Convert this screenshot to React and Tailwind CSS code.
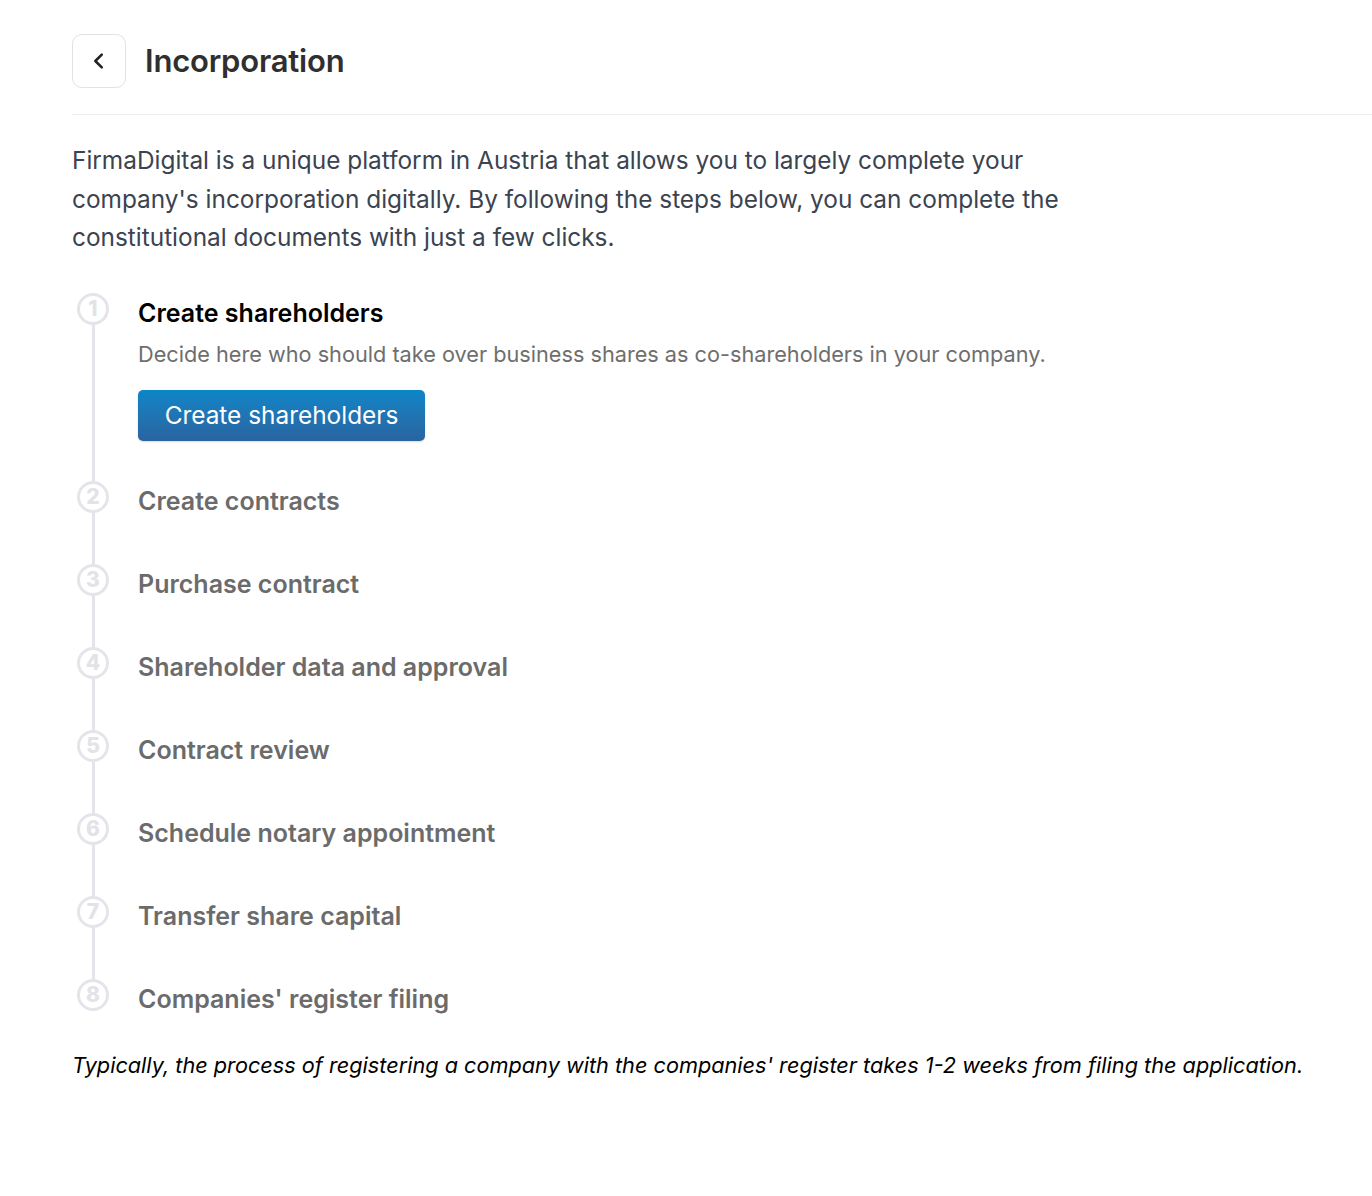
import React from "react";

const steps = [
  "Create contracts",
  "Purchase contract",
  "Shareholder data and approval",
  "Contract review",
  "Schedule notary appointment",
  "Transfer share capital",
  "Companies' register filing",
];

function Circle({ n }) {
  return (
    <div className="w-[32px] h-[32px] shrink-0 rounded-full border-[3px] border-[#e4e4ea] flex items-center justify-center text-[21px] font-extrabold text-[#e2e2e8] leading-none">
      {n}
    </div>
  );
}

function Step({ n, last, children }) {
  return (
    <div className="flex">
      <div className="w-[42px] flex flex-col items-center shrink-0">
        <Circle n={n} />
        {!last && <div className="w-[3px] flex-1 bg-[#e4e4ea]" />}
      </div>
      <div className={`ml-[24px] pt-[4px] ${last ? "" : "pb-[47px]"}`}>
        {children}
      </div>
    </div>
  );
}

export default function App() {
  return (
    <div
      className="min-h-screen bg-white pl-[72px]"
      style={{ fontFamily: "Inter, 'Noto Sans', sans-serif" }}
    >
      <div className="h-[115px] border-b border-[#ececef] flex items-start pt-[34px]">
        <button className="w-[54px] h-[54px] rounded-[10px] border border-[#e2e2e6] flex items-center justify-center text-[#222]">
          <svg width="22" height="22" viewBox="0 0 24 24" fill="none" stroke="currentColor" strokeWidth="2.8" strokeLinecap="round" strokeLinejoin="round">
            <path d="M15 5l-7 7 7 7" />
          </svg>
        </button>
        <h1 className="ml-[19px] h-[54px] flex items-center text-[31px] font-semibold text-[#2f2f2f] tracking-[-0.2px]">
          Incorporation
        </h1>
      </div>

      <p className="mt-[26px] max-w-[1020px] text-[24.4px] leading-[38.5px] text-[#3c4350]">
        FirmaDigital is a unique platform in Austria that allows you to largely complete your company's incorporation digitally. By following the steps below, you can complete the constitutional documents with just a few clicks.
      </p>

      <div className="mt-[36px]">
        <div className="flex">
          <div className="w-[42px] flex flex-col items-center shrink-0">
            <Circle n={1} />
            <div className="w-[3px] flex-1 bg-[#e4e4ea]" />
          </div>
          <div className="ml-[24px] pt-[4px] pb-[40px]">
            <div className="text-[25px] leading-[32px] font-semibold text-black">
              Create shareholders
            </div>
            <div className="mt-[11px] text-[21.7px] leading-[28px] text-[#6e6e6e]">
              Decide here who should take over business shares as co-shareholders in your company.
            </div>
            <button className="mt-[22px] w-[287px] h-[51px] rounded-[5px] bg-gradient-to-b from-[#0a86c8] to-[#2864a0] text-white text-[24.4px] flex items-center justify-center shadow-[0_1px_2px_rgba(0,0,0,0.15)]">
              Create shareholders
            </button>
          </div>
        </div>
        {steps.map((s, i) => (
          <Step key={s} n={i + 2} last={i === steps.length - 1}>
            <div className="text-[25px] leading-[32px] font-semibold text-[#6b6b6b]">{s}</div>
          </Step>
        ))}
      </div>

      <p className="mt-[36px] text-[21.7px] leading-[28px] italic text-black">
        Typically, the process of registering a company with the companies' register takes 1-2 weeks from filing the application.
      </p>
    </div>
  );
}
